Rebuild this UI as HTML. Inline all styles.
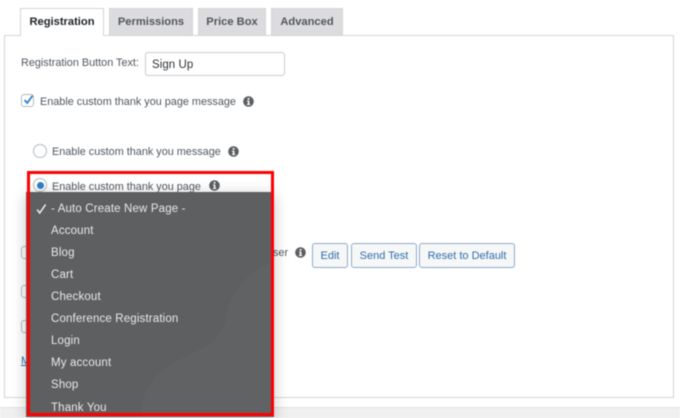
<!DOCTYPE html>
<html><head><meta charset="utf-8">
<style>
html,body{margin:0;padding:0;background:#fff}
#p{position:relative;width:680px;height:418px;overflow:hidden;background:#fff;font-family:"Liberation Sans",sans-serif;font-size:10.85px;color:#50575e;filter:blur(.4px)}
#p div,#p svg,#p span{position:absolute;white-space:nowrap;box-sizing:border-box}
.t{line-height:14px}
.tab{top:8px;height:27px;background:#dcdcde;border:1px solid #d5d5d7;border-bottom:0;text-align:center;line-height:27px;font-weight:bold;font-size:11.15px;color:#50575e}
.btn{top:243px;height:24.5px;background:#f6f7f7;border:1px solid #8fa9cc;border-radius:3px;color:#2f6ead;text-align:center;line-height:24px;font-size:11px}
.cb{width:13px;height:13px;border:1px solid #b4b9be;border-radius:3px;background:#fff}
.m{left:51px;color:#e9e9e9;font-size:11.5px;line-height:14px;letter-spacing:.15px}
</style></head><body>
<div id="p">
<div style="left:0;top:407px;width:680px;height:11px;background:#f0f0f1;border-top:1px solid #e2e2e2"></div>
<div style="left:4px;top:35px;width:670px;height:363px;border:1px solid #d4d4d6;background:#fff"></div>
<div class="tab" style="left:20px;width:84px;height:28px;background:#fff;color:#1d2327;border-color:#d5d5d7">Registration</div>
<div class="tab" style="left:109px;width:84px">Permissions</div>
<div class="tab" style="left:198px;width:68px">Price Box</div>
<div class="tab" style="left:271px;width:72px">Advanced</div>

<div class="t" style="left:21px;top:56px">Registration Button Text:</div>
<div style="left:145px;top:52px;width:140px;height:24px;border:1px solid #c9ccd0;border-radius:3px;background:#fff;color:#2c3338;line-height:24px;padding-left:6px;font-size:11.5px;letter-spacing:.05px">Sign Up</div>

<div class="cb" style="left:21px;top:94px"></div>
<svg style="left:22px;top:93px" width="13" height="13" viewBox="0 0 13 13"><path d="M2.5 7 L5.2 10 L10.6 2.6" fill="none" stroke="#2f7fc4" stroke-width="1.8"/></svg>
<div class="t" style="left:40px;top:95px">Enable custom thank you page message</div>
<svg style="left:243px;top:96px" width="11" height="11" viewBox="0 0 11 11"><circle cx="5.5" cy="5.5" r="5.3" fill="#5c5f62"/><rect x="4.7" y="2" width="1.8" height="1.7" fill="#fff"/><path d="M3.9 4.6H6.4V8H7.2V9H3.9V8H4.8V5.5H3.9Z" fill="#fff"/></svg>

<div style="left:33px;top:144px;width:14px;height:14px;border:1px solid #b4b9be;border-radius:50%;background:#fff"></div>
<div class="t" style="left:52px;top:145px">Enable custom thank you message</div>
<svg style="left:228px;top:146px" width="11" height="11" viewBox="0 0 11 11"><circle cx="5.5" cy="5.5" r="5.3" fill="#5c5f62"/><rect x="4.7" y="2" width="1.8" height="1.7" fill="#fff"/><path d="M3.9 4.6H6.4V8H7.2V9H3.9V8H4.8V5.5H3.9Z" fill="#fff"/></svg>

<div style="left:33px;top:178px;width:14px;height:14px;border:1px solid #b4b9be;border-radius:50%;background:#fff"></div>
<div style="left:36.5px;top:181.5px;width:7px;height:7px;border-radius:50%;background:#2f7fc4"></div>
<div class="t" style="left:52px;top:179.5px">Enable custom thank you page</div>
<svg style="left:209px;top:180px" width="11" height="11" viewBox="0 0 11 11"><circle cx="5.5" cy="5.5" r="5.3" fill="#5c5f62"/><rect x="4.7" y="2" width="1.8" height="1.7" fill="#fff"/><path d="M3.9 4.6H6.4V8H7.2V9H3.9V8H4.8V5.5H3.9Z" fill="#fff"/></svg>

<div class="cb" style="left:21px;top:246px"></div>
<div class="cb" style="left:21px;top:285px"></div>
<div class="cb" style="left:21px;top:320px"></div>
<div class="t" style="left:21px;top:354px;color:#2271b1;text-decoration:underline">M</div>
<div class="t" style="left:273px;top:246px">ser</div>
<svg style="left:295px;top:247px" width="11" height="11" viewBox="0 0 11 11"><circle cx="5.5" cy="5.5" r="5.3" fill="#5c5f62"/><rect x="4.7" y="2" width="1.8" height="1.7" fill="#fff"/><path d="M3.9 4.6H6.4V8H7.2V9H3.9V8H4.8V5.5H3.9Z" fill="#fff"/></svg>
<div class="btn" style="left:312px;width:36px">Edit</div>
<div class="btn" style="left:351px;width:66px">Send Test</div>
<div class="btn" style="left:419px;width:96px">Reset to Default</div>

<div style="left:26px;top:192px;width:248px;height:225px;background:#5e5f60;box-shadow:0 3px 14px rgba(0,0,0,.22)"></div>
<svg style="left:26px;top:192px" width="248" height="225" viewBox="26 192 248 225"><path d="M272 262C245 275 230 290 226 318C222 345 190 352 165 368C145 382 142 400 140 417H272Z" fill="#fff" opacity=".018"/></svg>
<svg style="left:36px;top:203px" width="11" height="12" viewBox="0 0 11 12"><path d="M1.2 6.6 L3.7 10 L9.6 1.6" fill="none" stroke="#f0f0f0" stroke-width="1.5"/></svg>
<div class="m" style="top:201.5px">- Auto Create New Page -</div>
<div class="m" style="top:223.5px">Account</div>
<div class="m" style="top:245.5px">Blog</div>
<div class="m" style="top:267.5px">Cart</div>
<div class="m" style="top:289.5px">Checkout</div>
<div class="m" style="top:311.5px">Conference Registration</div>
<div class="m" style="top:334px">Login</div>
<div class="m" style="top:356px">My account</div>
<div class="m" style="top:378px">Shop</div>
<div class="m" style="top:400.5px">Thank You</div>
<div style="left:27px;top:171px;width:247px;height:244.5px;border:3px solid #f00"></div>
</div>
</body></html>
